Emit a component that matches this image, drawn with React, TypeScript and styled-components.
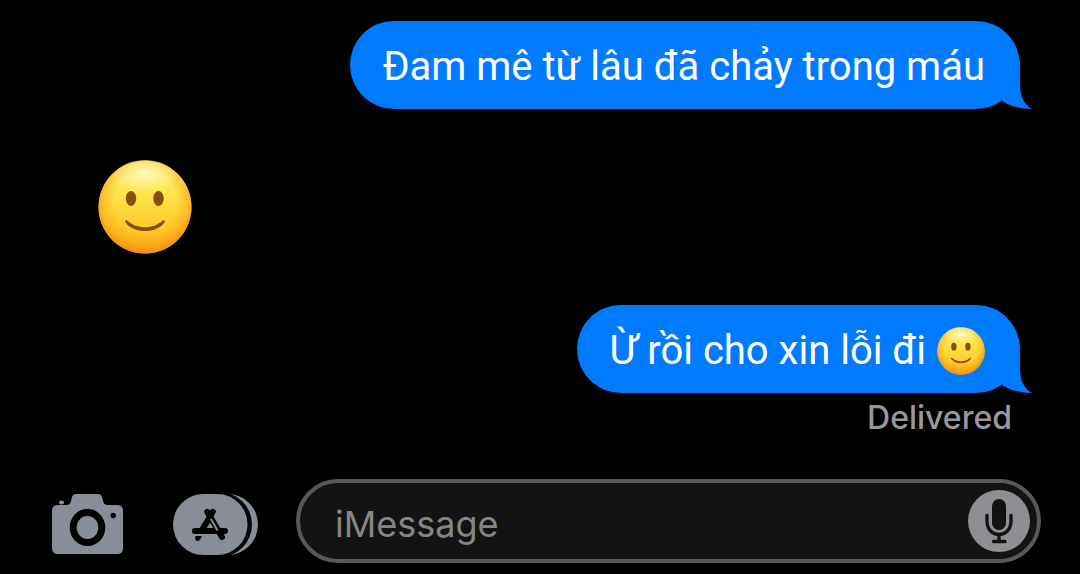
import React, { useId } from "react";
import styled, { createGlobalStyle } from "styled-components";

const GlobalStyle = createGlobalStyle`
  *, *::before, *::after { box-sizing: border-box; }
  body {
    margin: 0;
    background: #000;
    font-family: Inter, "Liberation Sans", sans-serif;
  }
`;

const Screen = styled.main`
  display: flex;
  flex-direction: column;
  min-height: 100vh;
  padding-top: 21px;
  background: #000;
`;

const Thread = styled.section`
  display: flex;
  flex-direction: column;
  flex: 1;
  gap: 51px;
  padding: 0 60px 0 98px;
`;

const Message = styled.div<{ $sent?: boolean }>`
  display: flex;
  flex-direction: column;
  align-items: ${(p) => (p.$sent ? "flex-end" : "flex-start")};
`;

const Bubble = styled.p`
  position: relative;
  display: flex;
  align-items: center;
  gap: 11px;
  min-height: 88px;
  margin: 0;
  padding: 16px 35px 12px 33px;
  border-radius: 44px;
  background: #007aff;
  color: #fff;
  font-family: Roboto, Inter, sans-serif;
  font-size: 40px;
  line-height: 60px;
`;

const Tail = styled.svg`
  position: absolute;
  right: -12px;
  bottom: 0;
  width: 32px;
  height: 48px;
`;

const Status = styled.p`
  margin: 4px 8px 0 0;
  color: #98989c;
  font-size: 32px;
  font-weight: 500;
  line-height: 42px;
`;

const Face = styled.svg<{ $size: number }>`
  display: block;
  flex: none;
  width: ${(p) => p.$size}px;
  height: ${(p) => p.$size}px;
`;

const Composer = styled.form`
  display: flex;
  align-items: center;
  gap: 38px;
  padding: 0 39px 11px 52px;
`;

const Actions = styled.div`
  display: flex;
  align-items: center;
  gap: 50px;
  padding-top: 6px;
`;

const IconButton = styled.button`
  display: block;
  flex: none;
  padding: 0;
  border: 0;
  background: none;
  color: #878e98;
  cursor: pointer;

  svg { display: block; }
`;

const Field = styled.div`
  display: flex;
  flex: 1;
  align-items: center;
  min-width: 0;
  height: 84px;
  padding: 0 7px 0 35px;
  border: 4px solid #58585a;
  border-radius: 42px;
  background: #131313;
`;

const TextInput = styled.input`
  flex: 1;
  min-width: 0;
  padding: 6px 0 0;
  border: 0;
  outline: 0;
  background: none;
  color: #fff;
  font-family: inherit;
  font-size: 36px;
  line-height: 48px;

  &::placeholder { color: #858587; opacity: 1; }
`;

function SmileFace({ size }: { size: number }) {
  const id = useId();
  return (
    <Face $size={size} viewBox="0 0 94 94" role="img" aria-label="Slightly smiling face">
      <defs>
        <linearGradient id={`${id}base`} x1="0" y1="0" x2="0" y2="1">
          <stop offset="0" stopColor="#fff07c" />
          <stop offset="0.35" stopColor="#ffe44c" />
          <stop offset="0.7" stopColor="#ffcd2c" />
          <stop offset="1" stopColor="#fdaa1b" />
        </linearGradient>
        <radialGradient id={`${id}rim`} cx="0.5" cy="0.45" r="0.55">
          <stop offset="0.6" stopColor="#f9a012" stopOpacity="0" />
          <stop offset="0.84" stopColor="#f9a012" stopOpacity="0.5" />
          <stop offset="1" stopColor="#ee8a0b" stopOpacity="0.9" />
        </radialGradient>
        <radialGradient id={`${id}shine`} cx="0.5" cy="0.4" r="0.6">
          <stop offset="0" stopColor="#fffbc5" stopOpacity="0.9" />
          <stop offset="1" stopColor="#fff49a" stopOpacity="0" />
        </radialGradient>
      </defs>
      <circle cx="47" cy="47" r="46.5" fill={`url(#${id}base)`} />
      <circle cx="47" cy="47" r="46.5" fill={`url(#${id}rim)`} />
      <ellipse cx="47" cy="17" rx="31" ry="17" fill={`url(#${id}shine)`} />
      <ellipse cx="33" cy="38.5" rx="5.2" ry="7.6" fill="#85500c" />
      <ellipse cx="60.5" cy="38.5" rx="5.2" ry="7.6" fill="#85500c" />
      <path d="M29.5 60.8C39 69.5 55 69.5 64.5 60.8C66.5 59.5 67.3 61 66.3 62.7C58 73.8 36 73.8 27.7 62.7C26.7 61 27.5 59.5 29.5 60.8Z" fill="#85500c" />
    </Face>
  );
}

function SentBubble({ children }: { children: React.ReactNode }) {
  return (
    <Bubble>
      {children}
      <Tail viewBox="0 0 32 48" aria-hidden="true">
        <path d="M20 0V22C20 34 23 43 32 48C19 48 10 45 2 40L0 20Z" fill="#007aff" />
      </Tail>
    </Bubble>
  );
}

function CameraIcon() {
  return (
    <svg width="71" height="60" viewBox="0 0 71 60" aria-hidden="true">
      <path d="M6 11H14C17 11 18 10 19 7L20 3Q21 0 24 0H46Q49 0 50 3L51 7C52 10 53 11 56 11H65Q71 11 71 17V54Q71 60 65 60H6Q0 60 0 54V17Q0 11 6 11Z" fill="currentColor" />
      <ellipse cx="9.5" cy="8.5" rx="2.6" ry="1.9" fill="currentColor" />
      <circle cx="61.2" cy="21.5" r="2.7" fill="#000" />
      <ellipse cx="35.5" cy="33.5" rx="14.3" ry="15" fill="none" stroke="#000" strokeWidth="7" />
    </svg>
  );
}

function AppsIcon() {
  return (
    <svg width="85" height="61" viewBox="0 0 85 61" aria-hidden="true">
      <rect x="12" width="73" height="61" rx="30.5" fill="currentColor" />
      <rect x="0" y="-2" width="79" height="65" rx="32.5" fill="#05090d" />
      <rect width="74.5" height="61" rx="30.5" fill="currentColor" />
      <g fill="none" stroke="#000" strokeLinecap="round" strokeWidth="6">
        <path d="M22 37H52" />
        <path d="M34.2 17.8L49 43" />
        <path d="M39.8 17.8L28.5 37" />
      </g>
      <path d="M38 25L44.5 36.5" stroke="currentColor" strokeWidth="2" fill="none" />
      <path d="M22.6 42H29.2L26.8 45.8Q24.8 48 22.6 46.2Q21.4 44.5 22.6 42Z" fill="#000" />
    </svg>
  );
}

function MicIcon() {
  return (
    <svg width="62" height="62" viewBox="0 0 62 62" aria-hidden="true">
      <circle cx="31" cy="31" r="31" fill="#8e8e93" />
      <rect x="24" y="9" width="14" height="31" rx="7" fill="#131313" />
      <path d="M19 25.5V31C19 49 43 49 43 31V25.5M31 45V51M25.5 51.5H37" fill="none" stroke="#131313" strokeWidth="3.4" strokeLinecap="round" />
    </svg>
  );
}

export default function App() {
  return (
    <Screen>
      <GlobalStyle />
      <Thread aria-label="Conversation">
        <Message $sent>
          <SentBubble>Đam mê từ lâu đã chảy trong máu</SentBubble>
        </Message>
        <Message>
          <SmileFace size={94} />
        </Message>
        <Message $sent>
          <SentBubble>
            Ừ rồi cho xin lỗi đi
            <SmileFace size={48} />
          </SentBubble>
          <Status>Delivered</Status>
        </Message>
      </Thread>
      <Composer onSubmit={(e) => e.preventDefault()}>
        <Actions>
          <IconButton type="button" aria-label="Camera">
            <CameraIcon />
          </IconButton>
          <IconButton type="button" aria-label="Apps">
            <AppsIcon />
          </IconButton>
        </Actions>
        <Field>
          <TextInput type="text" aria-label="Message" placeholder="iMessage" />
          <IconButton type="button" aria-label="Record audio">
            <MicIcon />
          </IconButton>
        </Field>
      </Composer>
    </Screen>
  );
}
